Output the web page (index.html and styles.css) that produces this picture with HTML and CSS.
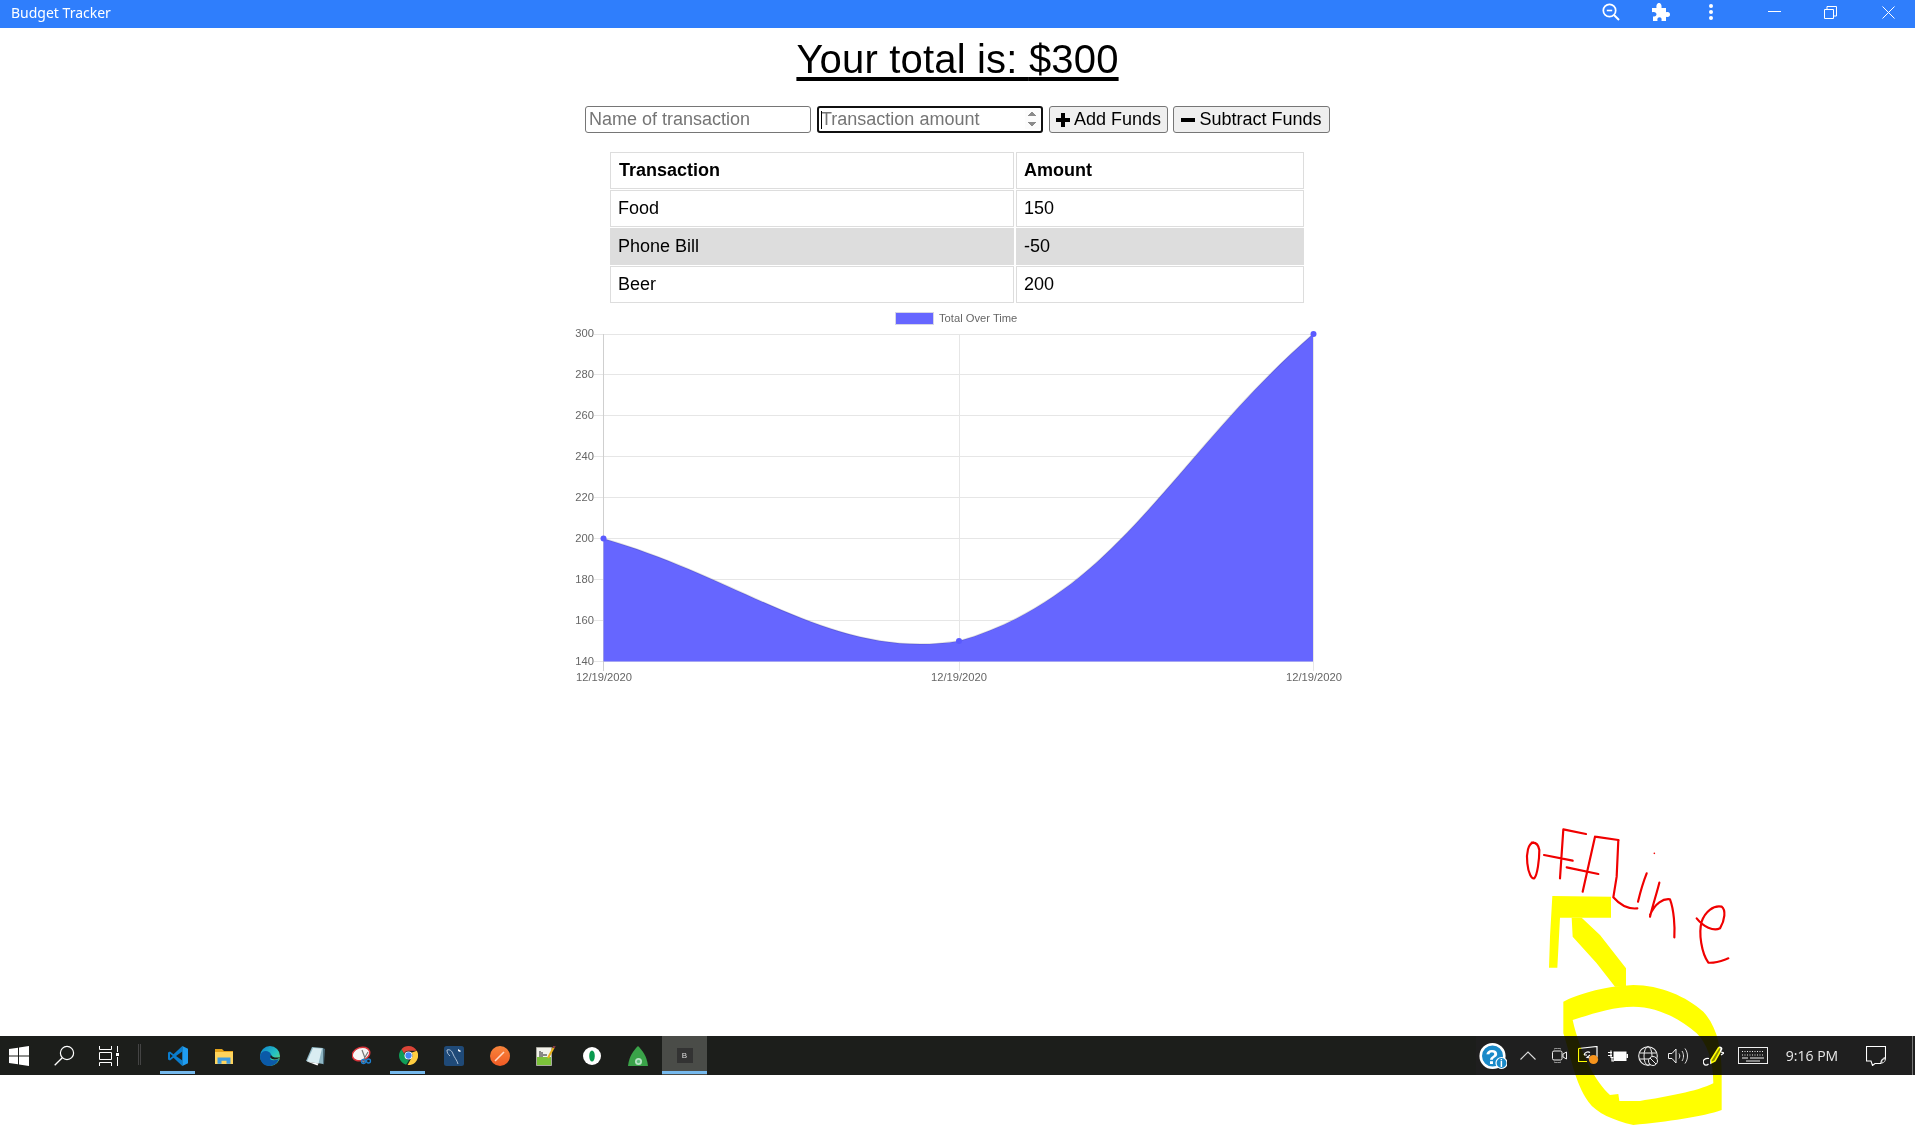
FILE: index.html
```html
<!DOCTYPE html>
<html lang="en">
<head>
<meta charset="utf-8">
<title>Budget Tracker</title>
<link rel="stylesheet" href="styles.css">
</head>
<body>
<div class="window">
  <header class="titlebar">
    <span class="app-name">Budget Tracker</span>
    <div class="title-actions">
      <svg class="tb-zoom" width="18" height="18" viewBox="0 0 18 18"><circle cx="7.5" cy="7.5" r="6.2" fill="none" stroke="#fff" stroke-width="1.7"/><path d="M12 12l5 5" stroke="#fff" stroke-width="2"/><path d="M4.8 7.5h5.4" stroke="#fff" stroke-width="1.6"/></svg>
      <svg class="tb-puzzle" width="18" height="18" viewBox="0 0 18 18"><path fill="#fff" d="M0 5h4.5C4 1.5 5.5 0 7 0s3 1.500 2.500 5H14v4.300c3-.7 4 .7 4 2.200s-1 3-4 2.300V18H9.500c.6-2.800-.6-3.800-2-3.800s-2.600 1-2 3.800H1v-4.500c2.500.5 3.500-.8 3.500-2.200S3 8.500 0 9.300z"/></svg>
      <svg class="tb-dots" width="4" height="16" viewBox="0 0 4 16"><circle cx="2" cy="2" r="2" fill="#fff"/><circle cx="2" cy="8" r="2" fill="#fff"/><circle cx="2" cy="14" r="2" fill="#fff"/></svg>
      <svg class="tb-min" width="13" height="13" viewBox="0 0 13 13"><path d="M0 5.500h13" stroke="#fff"/></svg>
      <svg class="tb-restore" width="13" height="13" viewBox="0 0 13 13"><path d="M.5 3.500h9v9h-9zM3 3.500v-3h9.500v9.500H9.500" fill="none" stroke="#fff"/></svg>
      <svg class="tb-close" width="13" height="13" viewBox="0 0 13 13"><path d="M.5.500l12 12M12.500.500l-12 12" stroke="#fff"/></svg>
    </div>
  </header>

  <main class="content">
    <h1 class="total">Your total is: <span>$300</span></h1>

    <form class="entry">
      <input class="field" type="text" placeholder="Name of transaction">
      <div class="field-focus">
        <input class="field field-num" type="number" placeholder="Transaction amount">
      </div>
      <button class="btn btn-add" type="button">
        <svg width="14" height="14" viewBox="0 0 14 14"><path d="M5 0h4v5h5v4H9v5H5V9H0V5h5z"/></svg>
        Add Funds
      </button>
      <button class="btn btn-sub" type="button">
        <svg width="14" height="14" viewBox="0 0 14 14"><path d="M0 5h14v4H0z"/></svg>
        Subtract Funds
      </button>
    </form>

    <table class="ledger">
      <thead>
        <tr><th class="col-a">Transaction</th><th class="col-b">Amount</th></tr>
      </thead>
      <tbody>
        <tr><td>Food</td><td>150</td></tr>
        <tr class="alt"><td>Phone Bill</td><td>-50</td></tr>
        <tr><td>Beer</td><td>200</td></tr>
      </tbody>
    </table>

    <svg class="chart" width="777" height="395" viewBox="569 305 777 395">
      <g class="grid">
        <path d="M594 334.500H1313M594 374.500H1313M594 415.500H1313M594 456.500H1313M594 497.500H1313M594 538.500H1313M594 579.500H1313M594 620.500H1313M594 661.500H1313"/>
        <path d="M959.500 334V671M1313.500 334V671"/>
      </g>
      <path class="axis" d="M603.500 334V671"/>
      <rect class="legend-box" x="895.500" y="312.500" width="38" height="12"/>
      <text class="legend-text" x="939" y="322">Total Over Time</text>
      <g class="ticks-y">
        <text x="594" y="337">300</text>
        <text x="594" y="378">280</text>
        <text x="594" y="419">260</text>
        <text x="594" y="460">240</text>
        <text x="594" y="501">220</text>
        <text x="594" y="542">200</text>
        <text x="594" y="583">180</text>
        <text x="594" y="624">160</text>
        <text x="594" y="665">140</text>
      </g>
      <g class="ticks-x">
        <text x="604" y="681">12/19/2020</text>
        <text x="959" y="681">12/19/2020</text>
        <text x="1314" y="681">12/19/2020</text>
      </g>
      <path class="area" d="M603.500 538.500C745.700 579.500 833.800 661 959 641C1117.600 595.200 1171.400 457 1313 334V661.500H603.500Z"/>
      <path class="area-line" d="M603.500 538.500C745.700 579.500 833.800 661 959 641C1117.600 595.200 1171.400 457 1313 334"/>
      <circle class="pt" cx="603.500" cy="538.500" r="3"/>
      <circle class="pt" cx="959" cy="641" r="3"/>
      <circle class="pt" cx="1313.500" cy="334" r="3"/>
    </svg>
  </main>

  <footer class="taskbar">
    <div class="cell w38">
      <svg width="20" height="20" viewBox="0 0 20 20"><path fill="#fff" d="M0 3l9-1.300V9.500H0zM10 1.500L20 0v9.500H10zM0 10.500h9v7.800L0 17zM10 10.500h10V20l-10-1.500z"/></svg>
    </div>
    <div class="cell w52">
      <svg width="21" height="21" viewBox="0 0 21 21"><circle cx="13" cy="8" r="6.600" fill="none" stroke="#fff" stroke-width="1.200"/><path d="M8.300 12.700L.7 20.300" stroke="#fff" stroke-width="1.300"/></svg>
    </div>
    <div class="cell w38">
      <svg width="20" height="20" viewBox="0 0 20 20"><path d="M.5 0v3.500h12V0M.5 20v-3.500h12V20M.500 6.500h12v7H.5zM18.500 0v6M18.500 11v9" fill="none" stroke="#fff"/><rect x="17" y="7" width="3" height="3" fill="#fff"/></svg>
    </div>
    <div class="divider"></div>
    <div class="cell w46 running">
      <svg width="20" height="20" viewBox="0 0 20 20"><path fill="#0a7ccc" d="M14.300 0L5.500 8.300 2 5.600 0 6.600v6.800l2 1 3.500-2.700 8.800 8.300v-5.500L8 10l6.300-4.500zM2 7.700L4.800 10 2 12.300z"/><path fill="#1f9cf0" d="M14.300 0L20 2.800v14.400L14.300 20z"/></svg>
    </div>
    <div class="cell w46">
      <svg width="18" height="16" viewBox="0 0 18 16"><path fill="#e3a21a" d="M0 1h7l2 2h9v3H0z"/><path fill="#ffd45c" d="M0 4h18v12H0z"/><path fill="#3e9be0" d="M2.500 15.800V9.500h13v6.300h-4v-3h-5v3z"/></svg>
    </div>
    <div class="cell w46">
      <svg width="20" height="20" viewBox="0 0 20 20"><defs><linearGradient id="edge" x1="0" y1="0" x2="1" y2="1"><stop offset="0" stop-color="#0f7fd0"/><stop offset=".55" stop-color="#25c2c0"/><stop offset="1" stop-color="#7ddc55"/></linearGradient></defs><circle cx="10" cy="10" r="10" fill="url(#edge)"/><path fill="#0b5aa8" d="M0 10C1 5 6 4 9 6c3 2 3 5 1 7 3 2 6 1 9 0-2 5-6 7-10 7-5 0-9-4-9-10z"/><path fill="#1b1d19" d="M11 9c2 3 6 3 9 2-1 2-5 3-8 2-2-1-2-3-1-4z"/></svg>
    </div>
    <div class="cell w46">
      <svg width="20" height="20" viewBox="0 0 20 20"><path fill="#8fb7c4" d="M0 15L6 1l11 1v16z"/><path fill="#d9edf2" d="M1 15.500L7 2l9 .5-3.500 15z"/><path fill="#4a6a78" d="M17 2l2 1-1 15-1 .5z"/><path fill="#fff" d="M1 15.500l11.500 2-1 2z"/></svg>
    </div>
    <div class="cell w46">
      <svg width="20" height="20" viewBox="0 0 20 20"><ellipse cx="9" cy="8" rx="9" ry="6.500" transform="rotate(-20 9 8)" fill="#f5f5f5" stroke="#d8333a" stroke-width="1.500"/><path d="M6 14c3 2 7 1 8-1l-2 4z" fill="#8a8a8a"/><path d="M10 4l3 8M16 6l-4 7" stroke="#777" stroke-width="1.200"/><circle cx="11.500" cy="15.500" r="2" fill="none" stroke="#1e7fd0" stroke-width="1.300"/><circle cx="16.500" cy="15" r="2" fill="none" stroke="#1e7fd0" stroke-width="1.300"/></svg>
    </div>
    <div class="cell w46 running">
      <svg width="19" height="19" viewBox="0 0 20 20"><path fill="#db4437" d="M10 0a10 10 0 0 1 8.700 5H10a5 5 0 0 0-4.700 3.300L2.600 3.300A10 10 0 0 1 10 0z"/><path fill="#0f9d58" d="M2.600 3.300l4.400 7.700a3.500 3.500 0 0 0 3.600 4L7.500 19.700A10 10 0 0 1 2.600 3.300z"/><path fill="#ffcd40" d="M18.700 5A10 10 0 0 1 9 20l4-7a4 4 0 0 0 0-6z"/><circle cx="10" cy="10" r="4.200" fill="#fff"/><circle cx="10" cy="10" r="3.300" fill="#4285f4"/></svg>
    </div>
    <div class="cell w46">
      <svg width="20" height="20" viewBox="0 0 20 20"><rect width="20" height="20" rx="2.500" fill="#1f4a78"/><path d="M3 4c3-1 5 1 6 4s4 6 5 10M3 4c0 3 1 4 3 6" fill="none" stroke="#b9cbe0" stroke-width=".9"/><path d="M14 3l3 2-1 1-2-1z" fill="#fff"/></svg>
    </div>
    <div class="cell w46">
      <svg width="20" height="20" viewBox="0 0 20 20"><defs><linearGradient id="pm" x1="0" y1="0" x2="0" y2="1"><stop offset="0" stop-color="#f7853c"/><stop offset="1" stop-color="#f05a24"/></linearGradient></defs><circle cx="10" cy="10" r="10" fill="url(#pm)"/><path d="M5 15L14 6" stroke="#ffd9c4" stroke-width="1.600"/></svg>
    </div>
    <div class="cell w46">
      <svg width="20" height="20" viewBox="0 0 20 20"><path fill="#f2f2ea" stroke="#a9a9a0" d="M.5 1.500h15v18H.5z"/><path fill="#7cc23a" d="M1 11h14v8H1z"/><path d="M4 5v6M6 6v5M8 8v2M10 8v2" stroke="#333" stroke-width="1.100"/><path d="M18.500 0L12 12" stroke="#e8b01d" stroke-width="2"/><path d="M18.500 0l-1 2" stroke="#7a2e4e" stroke-width="2"/></svg>
    </div>
    <div class="cell w46">
      <svg width="18" height="18" viewBox="0 0 18 18"><circle cx="9" cy="9" r="9" fill="#fff"/><ellipse cx="9" cy="9" rx="2.800" ry="5.500" fill="#0a9a4f"/></svg>
    </div>
    <div class="cell w46">
      <svg width="20" height="20" viewBox="0 0 20 20"><path fill="#3aa349" d="M10 0c4 4 9 10 10 20H0C1 10 6 4 10 0z"/><circle cx="10.500" cy="15.500" r="3.500" fill="#b7e3c4"/><circle cx="10.500" cy="15.500" r="1.700" fill="#5fbf7c"/></svg>
    </div>
    <div class="cell w45 running active">
      <span class="tab-badge">B</span>
    </div>

    <div class="tray">
      <div class="cell w34">
        <svg width="28" height="28" viewBox="0 0 28 28"><circle cx="13.500" cy="14" r="11.800" fill="#1a8ac9" stroke="#fff" stroke-width="2.600"/><text class="help-q" x="13" y="22">?</text><circle cx="22.500" cy="21" r="5.500" fill="#1a8ac9" stroke="#fff" stroke-width="1.200"/><text class="help-i" x="22.500" y="25">i</text></svg>
      </div>
      <div class="cell w36">
        <svg width="16" height="9" viewBox="0 0 16 9"><path d="M.5 8.500L8 1l7.500 7.500" fill="none" stroke="#ddd" stroke-width="1.100"/></svg>
      </div>
      <div class="cell w26">
        <svg width="15" height="15" viewBox="0 0 15 15"><rect x=".5" y="3" width="9.500" height="9" rx="1.500" fill="none" stroke="#eee"/><path d="M11 6l3.500-2v7L11 9z" fill="none" stroke="#eee"/><path d="M2 1c2-1 5-1 7 0M2 14c2 1 5 1 7 0" fill="none" stroke="#ccc" stroke-width=".8"/></svg>
      </div>
      <div class="cell w32">
        <svg width="21" height="19" viewBox="0 0 21 19"><path d="M.5 2.500L19 .5v11M.5 2.500v13H9" fill="none" stroke="#fff" stroke-width="1.200"/><path d="M6 9a4 4 0 0 1 6-2.500M6 9h3M12 9l-3 2.500 3 .5" fill="none" stroke="#fff" stroke-width="1.100"/><circle cx="15.500" cy="13.500" r="4.600" fill="#f7941d"/></svg>
      </div>
      <div class="cell w28">
        <svg width="20" height="13" viewBox="0 0 20 13"><path d="M0 3.500h4M0 6.500h4M3 1.500v7h2.500M4 8v4h2" fill="none" stroke="#fff" stroke-width="1.200"/><path fill="#fff" d="M5.500 2.500h13v9.500h-13z"/><rect x="18.500" y="5" width="1.500" height="4" fill="#fff"/></svg>
      </div>
      <div class="cell w32">
        <svg width="20" height="20" viewBox="0 0 20 20"><circle cx="10" cy="10" r="9.300" fill="none" stroke="#eee" stroke-width="1.100"/><ellipse cx="10" cy="10" rx="4" ry="9.300" fill="none" stroke="#eee"/><path d="M1.500 7h17M1.500 13h17" stroke="#eee"/><circle cx="15" cy="15" r="4.500" fill="#1f1f1f" stroke="#eee"/><path d="M12 12l6 6" stroke="#eee"/></svg>
      </div>
      <div class="cell w28">
        <svg width="20" height="16" viewBox="0 0 20 16"><path d="M.5 5.500h3.500L8 1v14l-4-4.500H.5z" fill="none" stroke="#eee"/><path d="M11 5.500c1 1.500 1 3.500 0 5M14 3c2 3 2 7 0 10M17 .5c3.300 4.500 3.300 10.500 0 15" fill="none" stroke="#ddd"/></svg>
      </div>
      <div class="cell w42">
        <svg width="21" height="20" viewBox="0 0 21 20"><path d="M8 14L15.500 2c1-1.500 3.500-.5 3 1.200L12 15l-4 2z" fill="#8a8a40" stroke="#fff" stroke-width="1.600"/><path d="M18 6l3 1-3 2" fill="none" stroke="#fff" stroke-width="1.200"/><path d="M6 12.500c-4-.5-6.500 1.500-5.500 4.500s3.500 2.500 5 1" fill="none" stroke="#fff" stroke-width="1.200"/></svg>
      </div>
      <div class="cell w38">
        <svg width="30" height="17" viewBox="0 0 30 17"><rect x=".5" y=".5" width="29" height="16" fill="none" stroke="#eee"/><path d="M4 4.500h22M4 8h22" stroke="#eee" stroke-dasharray="1 1.500"/><path d="M4 11h6M12 11h14M8 14h14" stroke="#eee"/></svg>
      </div>
      <div class="cell w80 clock">9:16 PM</div>
      <div class="cell w48">
        <svg width="20" height="20" viewBox="0 0 20 20"><path d="M.5.500h19v12.500c-2-1-5 1-4.500 4.500H9L6.500 19.500 5 15H.5z" fill="none" stroke="#fff" stroke-width="1.100"/><path d="M16 17c-1-3 1-5 3-5.500 1 3-.5 5-3 5.500z" fill="none" stroke="#ddd"/></svg>
      </div>
      <div class="tray-end"></div>
    </div>
  </footer>
</div>

<svg class="scribble" width="260" height="305" viewBox="0 0 780 915">
  <g class="hi">
    <path d="M157 228L333 230V293H180L172 443H147L150 350Z"/>
    <path d="M215 293H245L300 345L378 445V500H345L290 430L218 350Z"/>
    <path fill-rule="evenodd" d="M190 545C230 525 300 500 400 495C480 495 560 530 610 575C650 620 665 680 665 760V870C610 890 500 905 400 915C340 900 290 880 265 845C225 790 210 700 190 640ZM218 600C280 580 340 560 400 560C470 560 540 595 590 640C620 670 640 720 640 790C590 815 500 830 420 843H358L355 822L330 825C290 790 240 700 218 600Z"/>
  </g>
  <g class="ink">
    <path d="M100 68C85 70 78 100 82 130C85 160 95 178 103 175C112 165 118 120 118 90C115 72 108 66 95 68"/>
    <path d="M132 105L218 122M190 28L180 175M190 28L258 42"/>
    <path d="M285 50L355 60M285 50L248 215M200 142L295 162"/>
    <path d="M355 60L350 170L340 232C360 255 385 268 412 265"/>
    <path d="M440 160C430 185 420 220 414 245"/>
    <path d="M478 188C470 220 460 250 450 290M450 285C465 250 490 235 510 238C522 270 525 320 523 352"/>
    <path d="M590 295C610 320 640 335 660 325C675 300 678 270 665 260C640 255 615 275 605 305C595 340 605 400 625 428C650 430 670 420 685 415"/>
  </g>
  <circle class="ink-dot" cx="463" cy="100" r="2.500"/>
</svg>
</body>
</html>
```
FILE: styles.css
```css
html, body {
  margin: 0;
  padding: 0;
  background: #fff;
}

body {
  position: relative;
  width: 1915px;
  height: 1125px;
  overflow: hidden;
  font-family: "Liberation Sans", Arial, sans-serif;
  color: #000;
}

.window {
  display: flex;
  flex-direction: column;
  height: 1075px;
}

/* title bar */
.titlebar {
  display: flex;
  align-items: center;
  justify-content: space-between;
  flex: 0 0 28px;
  padding-left: 11px;
  background: #2f7efc;
  color: #fff;
}

.app-name {
  margin-top: -3px;
  font-family: "Noto Sans", "Open Sans", sans-serif;
  font-size: 14px;
}

.title-actions {
  display: flex;
  align-items: center;
  height: 28px;
  padding-right: 20px;
}

.title-actions svg {
  display: block;
  margin-top: -4px;
}

.tb-puzzle { margin-left: 32px; }
.tb-dots { margin-left: 39px; }
.tb-min { margin-left: 55px; }
.tb-restore { margin-left: 43px; }
.tb-close { margin-left: 45px; }

/* main content */
.content {
  flex: 1;
  display: flex;
  flex-direction: column;
  align-items: center;
}

.total {
  margin: 8px 0 24px;
  font-size: 40px;
  font-weight: 400;
  line-height: 46px;
  letter-spacing: 0.18px;
  text-decoration: underline;
  text-decoration-thickness: 4px;
  text-underline-offset: 4px;
}

.entry {
  display: flex;
  gap: 6px;
  width: 745px;
  height: 27px;
}

.field {
  box-sizing: border-box;
  width: 226px;
  height: 27px;
  padding: 0 3px;
  border: 1px solid #767676;
  border-radius: 3px;
  background: #fff;
  font: 18px "Liberation Sans", Arial, sans-serif;
}

.field::placeholder {
  color: #757575;
}

.field-focus {
  position: relative;
  width: 226px;
  height: 27px;
}

.field-focus::before {
  content: "";
  position: absolute;
  left: 4px;
  top: 5px;
  width: 1px;
  height: 18px;
  background: #000;
}

.field-num {
  border: 2px solid #101010;
  padding: 0 1px 0 2px;
}

.field-num::-webkit-inner-spin-button {
  opacity: 1;
  height: 21px;
}

.btn {
  display: flex;
  align-items: center;
  justify-content: center;
  gap: 4px;
  box-sizing: border-box;
  height: 27px;
  padding: 0;
  border: 1px solid #767676;
  border-radius: 3px;
  background: #efefef;
  color: #000;
  font: 18px "Liberation Sans", Arial, sans-serif;
}

.btn-add { width: 119px; }
.btn-sub { width: 157px; margin-left: -1px; }

.ledger {
  margin: 18px 0 0 -1px;
  width: 698px;
  table-layout: fixed;
  border-collapse: separate;
  border-spacing: 2px 1px;
  font-size: 18px;
}

.ledger th,
.ledger td {
  box-sizing: border-box;
  height: 37px;
  padding: 0 8px 0 7px;
  border: 1px solid #ddd;
  text-align: left;
}

.ledger .col-a { width: 404px; padding-left: 8px; }
.ledger .col-b { width: 288px; }

.ledger .alt td {
  background: #ddd;
}

/* chart */
.chart {
  display: block;
  margin-top: 1px;
}

.grid path {
  fill: none;
  stroke: #e6e6e6;
  stroke-width: 1;
}

.axis {
  fill: none;
  stroke: #cfcfcf;
  stroke-width: 1;
}

.legend-box {
  fill: #6666ff;
  stroke: #d6d6e6;
  stroke-width: 1;
}

.chart text {
  font-family: "Liberation Sans", Arial, sans-serif;
  font-size: 11.2px;
  fill: #666;
}

.ticks-y text { text-anchor: end; }
.ticks-x text { text-anchor: middle; }

.area { fill: #6666ff; }

.area-line {
  fill: none;
  stroke: rgba(0, 0, 0, 0.12);
  stroke-width: 1.500;
}

.pt { fill: #5a5aff; }

/* taskbar */
.taskbar {
  display: flex;
  flex: 0 0 39px;
  background: #1c1e1b;
}

.cell {
  position: relative;
  display: flex;
  align-items: center;
  justify-content: center;
  flex: none;
  height: 39px;
}

.w26 { width: 26px; }
.w28 { width: 28px; }
.w32 { width: 32px; }
.w34 { width: 34px; }
.w36 { width: 36px; }
.w38 { width: 38px; }
.w42 { width: 42px; }
.w45 { width: 45px; }
.w46 { width: 46px; }
.w48 { width: 48px; }
.w52 { width: 52px; }
.w80 { width: 80px; }

.divider {
  flex: none;
  box-sizing: border-box;
  width: 3px;
  height: 21px;
  margin: 8px 14px 0 10px;
  border-left: 1px solid #444;
  border-right: 1px solid #444;
}

.running::after {
  content: "";
  position: absolute;
  left: 5px;
  right: 6px;
  bottom: 1px;
  height: 3px;
  background: #76b9ed;
}

.active {
  background: #4a4c48;
  margin-left: 1px;
}

.active::after {
  left: 0;
  right: 0;
}

.tab-badge {
  display: flex;
  align-items: center;
  justify-content: center;
  width: 16px;
  height: 15px;
  background: #333;
  color: #ddd;
  font-size: 8px;
}

.tray {
  display: flex;
  margin-left: auto;
  background: #1f1f1f;
}

.help-q {
  fill: #fff;
  font: 700 21px "Liberation Sans", Arial, sans-serif;
  text-anchor: middle;
}

.help-i {
  fill: #fff;
  font: 700 10px "Liberation Sans", Arial, sans-serif;
  text-anchor: middle;
}

.clock {
  color: #e8e8e8;
  font-family: "Open Sans", "Noto Sans", sans-serif;
  font-size: 14px;
}

.tray-end {
  position: relative;
  flex: none;
  width: 15px;
}

.tray-end::after {
  content: "";
  position: absolute;
  left: 12px;
  top: 0;
  width: 1px;
  height: 39px;
  background: #777;
}

/* hand-drawn annotation on top of the screenshot */
.scribble {
  position: absolute;
  left: 1500px;
  top: 820px;
  mix-blend-mode: multiply;
  pointer-events: none;
}

.hi path { fill: #ffff00; }

.ink path {
  fill: none;
  stroke: #f00000;
  stroke-width: 6.500;
  stroke-linecap: round;
  stroke-linejoin: round;
}

.ink-dot { fill: #f00000; }
```
